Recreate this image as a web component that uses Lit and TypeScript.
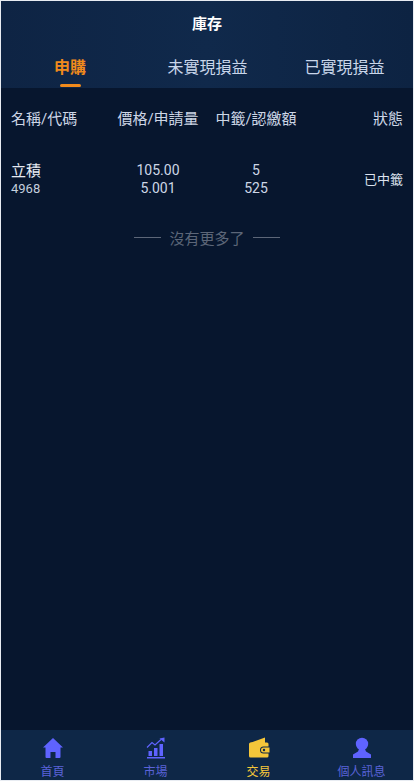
import { LitElement, html, css } from "lit";
import { customElement } from "lit/decorators.js";

@customElement("app-root")
export class AppRoot extends LitElement {
  static styles = css`
    :host { display: block; width: 414px; height: 781px; font-family: "Roboto", "Noto Sans CJK TC", sans-serif; }
    .page { box-sizing: border-box; width: 414px; height: 781px; display: flex; flex-direction: column; background: #07162e; color: #cdd6e6; border: 1px solid #e8ecf2; overflow: hidden; }
    .top { height: 87px; background: linear-gradient(90deg, #0e2444, #10294b 50%, #0d2342); display: flex; flex-direction: column; flex: none; }
    .title { height: 43px; display: flex; align-items: center; justify-content: center; color: #fff; font-size: 15px; font-weight: 700; }
    .tabs { flex: 1; display: grid; grid-template-columns: 138px 137px 137px; }
    .tab { display: flex; flex-direction: column; align-items: center; padding-top: 14px; font-size: 16px; line-height: 20px; color: #c9d6ea; position: relative; }
    .tab.on { color: #f08a1c; font-weight: 700; }
    .tab.on::after { content: ""; position: absolute; bottom: 1px; width: 21px; height: 3px; border-radius: 2px; background: #f08a1c; }
    .row { display: grid; grid-template-columns: 92px 110px 86px 1fr; padding: 0 10px; }
    .head { height: 58px; align-items: center; font-size: 15px; color: #cdd6e6; }
    .c { text-align: center; }
    .r { text-align: right; }
    .data { height: 58px; margin-top: 4px; align-items: center; font-size: 14px; }
    .name { font-size: 15px; line-height: 18px; color: #e6ebf3; }
    .code { font-size: 13px; line-height: 17px; color: #c4cedd; }
    .vals { line-height: 18px; color: #cdd6e6; }
    .status { font-size: 13px; color: #dde3ee; margin-bottom: 2px; }
    .more { display: flex; align-items: center; justify-content: center; gap: 8px; height: 20px; margin-top: 19px; font-size: 15px; color: #5c6678; }
    .more i { width: 27px; height: 1px; background: #5c6678; }
    .spacer { flex: 1; }
    .nav { height: 50px; flex: none; background: #0e2747; display: grid; grid-template-columns: repeat(4, 1fr); }
    .it { display: flex; flex-direction: column; align-items: center; font-size: 12px; color: #5a63d8; padding-top: 7px; }
    .it svg { width: 22px; height: 22px; display: block; }
    .it span { line-height: 14px; margin-top: 6px; }
    .it.on { color: #f5c63a; }
  `;

  render() {
    return html`<div class="page">
      <div class="top">
        <div class="title">庫存</div>
        <div class="tabs">
          <div class="tab on">申購</div>
          <div class="tab">未實現損益</div>
          <div class="tab">已實現損益</div>
        </div>
      </div>
      <div class="row head">
        <div>名稱/代碼</div><div class="c">價格/申請量</div><div class="c">中籤/認繳額</div><div class="r">狀態</div>
      </div>
      <div class="row data">
        <div><div class="name">立積</div><div class="code">4968</div></div>
        <div class="c vals">105.00<br />5.001</div>
        <div class="c vals">5<br />525</div>
        <div class="r status">已中籤</div>
      </div>
      <div class="more"><i></i>沒有更多了<i></i></div>
      <div class="spacer"></div>
      <div class="nav">
        <div class="it">
          <svg viewBox="0 0 22 22"><path fill="#5f63ff" d="M11 1 1 10.500h2.500V20a1 1 0 0 0 1 1h4v-6h5v6h4a1 1 0 0 0 1-1v-9.500H21z"/></svg>
          <span>首頁</span>
        </div>
        <div class="it">
          <svg viewBox="0 0 22 22"><path fill="#5f63ff" d="M2 21.500h18V20H2zM3.500 19H7v-5H3.500zM9 19h3.500v-8H9zM14.500 19H18V7h-3.500z"/><path fill="none" stroke="#5f63ff" stroke-width="1.200" d="M2 10.500 7 5.500l3 2.500 6-5.500"/><path fill="#5f63ff" d="M14.500 1.500 19.500 0.500v5z"/></svg>
          <span>市場</span>
        </div>
        <div class="it on">
          <svg viewBox="0 0 22 22"><path fill="#f5c63a" d="M2 6 17 0.500V6z"/><path fill="#f5c63a" d="M2.500 5.500H19a1.500 1.500 0 0 1 1.500 1.500v2.500h-5a3.500 3.500 0 0 0 0 7h5V19a1.500 1.500 0 0 1-1.500 1.500H2.500A1.500 1.500 0 0 1 1 19V7a1.500 1.500 0 0 1 1.500-1.500z"/><path fill="#f5c63a" d="M15.500 10.500H21.500v5h-6a2.500 2.500 0 0 1 0-5z"/><circle cx="16" cy="13" r="1.200" fill="#0e2747"/></svg>
          <span>交易</span>
        </div>
        <div class="it">
          <svg viewBox="0 0 22 22"><circle cx="11" cy="7" r="6.200" fill="#5f63ff"/><path fill="#5f63ff" d="M8 12h6l1 2.500 5 3V21H2v-3.500l5-3z"/></svg>
          <span>個人訊息</span>
        </div>
      </div>
    </div>`;
  }
}
